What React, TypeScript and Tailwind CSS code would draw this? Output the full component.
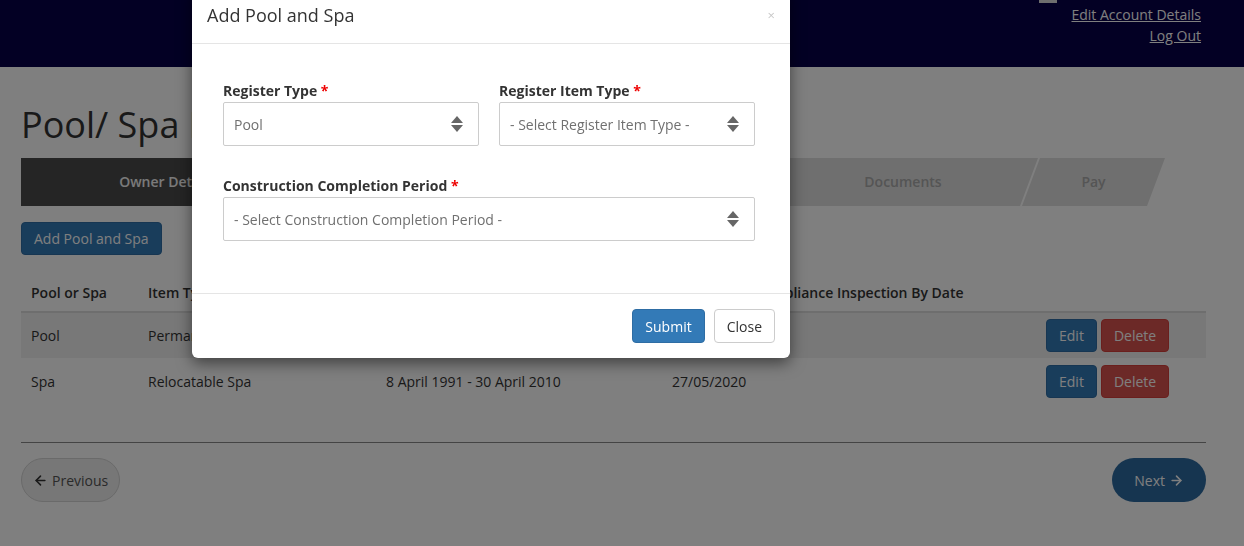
import React from 'react';
import { ArrowLeft, ArrowRight } from 'lucide-react';

// Wizard steps across the top of the page
const steps = [
  { label: 'Owner Details', width: 'w-[292px]', active: true },
  { label: 'Property Details', width: 'w-[236px]', active: false },
  { label: 'Pool and Spa', width: 'w-[267px]', active: false },
  { label: 'Documents', width: 'w-[270px]', active: false },
  { label: 'Pay', width: 'w-[143px]', active: false },
];

const rows = [
  { type: 'Pool', item: 'Permanent Pool', period: '1 May 2010 - 29 April 2016', date: '27/05/2020' },
  { type: 'Spa', item: 'Relocatable Spa', period: '8 April 1991 - 30 April 2010', date: '27/05/2020' },
];

function UpDown() {
  return (
    <svg width="12" height="16" viewBox="0 0 12 16" className="shrink-0">
      <polygon points="0,7 6,0 12,7" fill="#666" />
      <polygon points="0,9 12,9 6,16" fill="#666" />
    </svg>
  );
}

function SelectBox({ value }: { value: string }) {
  return (
    <div className="flex h-[44px] items-center justify-between rounded-[2px] border border-[#ccc] bg-white pl-[10px] pr-[15px] text-[14px] text-[#707070]">
      <span>{value}</span>
      <UpDown />
    </div>
  );
}

function Field({ label, value }: { label: string; value: string }) {
  return (
    <div>
      <div className="mb-[1px] text-[14px] font-bold leading-[20px] text-[#333]">
        {label} <span className="text-[#e00]">*</span>
      </div>
      <SelectBox value={value} />
    </div>
  );
}

export default function App() {
  return (
    <div className="relative min-h-[546px] bg-white font-['Open_Sans',sans-serif] text-[14px] text-[#333]">
      {/* top bar */}
      <div className="flex h-[67px] items-start justify-end bg-[#060048] pr-[43px]">
        <div className="mr-[14px] h-[3px] w-[18px] bg-[#ddd]" />
        <div className="flex flex-col items-end pt-[4px] leading-[21px] text-white">
          <a className="underline">Edit Account Details</a>
          <a className="underline">Log Out</a>
        </div>
      </div>

      <div className="pl-[21px] pr-[38px]">
        <h1 className="mt-[38px] mb-[13px] text-[36px] leading-[40px] text-[#333]">Pool/ Spa Registration</h1>

        <div className="flex h-[48px]">
          {steps.map((s, i) => (
            <div
              key={s.label}
              className={`${s.width} flex shrink-0 items-center justify-center pb-[1px] font-semibold ${
                i === 0
                  ? '[clip-path:polygon(0_0,100%_0,calc(100%_-_18px)_100%,0_100%)]'
                  : 'ml-[-16px] [clip-path:polygon(18px_0,100%_0,calc(100%_-_18px)_100%,0_100%)]'
              } ${s.active ? 'bg-[#4a4a4a] text-[#f5f5f5]' : 'bg-[#dfdfdf] text-[#aaa]'}`}
            >
              {s.label}
            </div>
          ))}
        </div>

        <button className="mt-[16px] h-[33px] rounded-[4px] border border-[#2e6da4] bg-[#337ab7] px-[12px] text-[14px] text-white">
          Add Pool and Spa
        </button>

        <table className="mt-[20px] w-full border-collapse text-left">
          <colgroup>
            <col className="w-[117px]" />
            <col className="w-[238px]" />
            <col className="w-[286px]" />
            <col className="w-[374px]" />
            <col />
          </colgroup>
          <thead>
            <tr>
              <th className="border-b-2 border-[#ddd] px-[10px] py-[8px] font-semibold leading-[20px]">Pool or Spa</th>
              <th className="border-b-2 border-[#ddd] px-[10px] py-[8px] font-semibold leading-[20px]">Item Type</th>
              <th className="border-b-2 border-[#ddd] px-[10px] py-[8px] font-semibold leading-[20px]">Construction Period</th>
              <th className="border-b-2 border-[#ddd] pl-[1px] pr-[10px] py-[8px] font-semibold leading-[20px]">Certificate of Compliance Inspection By Date</th>
              <th className="border-b-2 border-[#ddd] px-[10px] py-[8px]" />
            </tr>
          </thead>
          <tbody>
            {rows.map((r, i) => (
              <tr key={r.type} className={i === 0 ? 'bg-[#f1f1f1]' : ''}>
                <td className="h-[46px] px-[10px]">{r.type}</td>
                <td className="px-[10px]">{r.item}</td>
                <td className="px-[10px]">{r.period}</td>
                <td className="px-[10px]">{r.date}</td>
                <td className="px-[10px]">
                  <div className="flex gap-[4px]">
                    <button className="h-[33px] rounded-[4px] border border-[#2e6da4] bg-[#337ab7] px-[12px] text-white">Edit</button>
                    <button className="h-[33px] rounded-[4px] border border-[#d43f3a] bg-[#d9534f] px-[12px] text-white">Delete</button>
                  </div>
                </td>
              </tr>
            ))}
          </tbody>
        </table>

        <div className="mt-[38px] border-t border-[#888]" />

        <div className="mt-[15px] flex justify-between">
          <button className="flex h-[44px] items-center gap-[4px] rounded-full border border-[#d4d4d4] bg-[#eee] px-[11px] text-[#555]">
            <ArrowLeft size={15} strokeWidth={2.5} className="text-[#333]" />
            Previous
          </button>
          <button className="flex h-[44px] items-center gap-[4px] rounded-full bg-[#2c6aa0] px-[22px] text-white">
            Next
            <ArrowRight size={15} strokeWidth={2.5} />
          </button>
        </div>
      </div>

      {/* modal backdrop */}
      <div className="fixed inset-0 bg-black/50" />

      {/* modal */}
      <div className="absolute left-[192px] top-[-13px] w-[598px] rounded-[6px] bg-white shadow-[0_5px_15px_rgba(0,0,0,0.5)]">
        <div className="flex items-center justify-between border-b border-[#e5e5e5] p-[15px]">
          <h4 className="text-[18px] leading-[26px] text-[#333]">Add Pool and Spa</h4>
          <span className="text-[13px] leading-none text-[#c8c8c8]">×</span>
        </div>
        <div className="pl-[31px] pr-[35px] pt-[37px] pb-[52px]">
          <div className="grid grid-cols-2 gap-x-[20px]">
            <Field label="Register Type" value="Pool" />
            <Field label="Register Item Type" value="- Select Register Item Type -" />
          </div>
          <div className="mt-[30px]">
            <Field label="Construction Completion Period" value="- Select Construction Completion Period -" />
          </div>
        </div>
        <div className="flex justify-end gap-[9px] border-t border-[#e5e5e5] p-[15px]">
          <button className="h-[34px] rounded-[4px] border border-[#2e6da4] bg-[#337ab7] px-[12px] text-white">Submit</button>
          <button className="h-[34px] rounded-[4px] border border-[#ccc] bg-white px-[12px] text-[#333]">Close</button>
        </div>
      </div>
    </div>
  );
}
